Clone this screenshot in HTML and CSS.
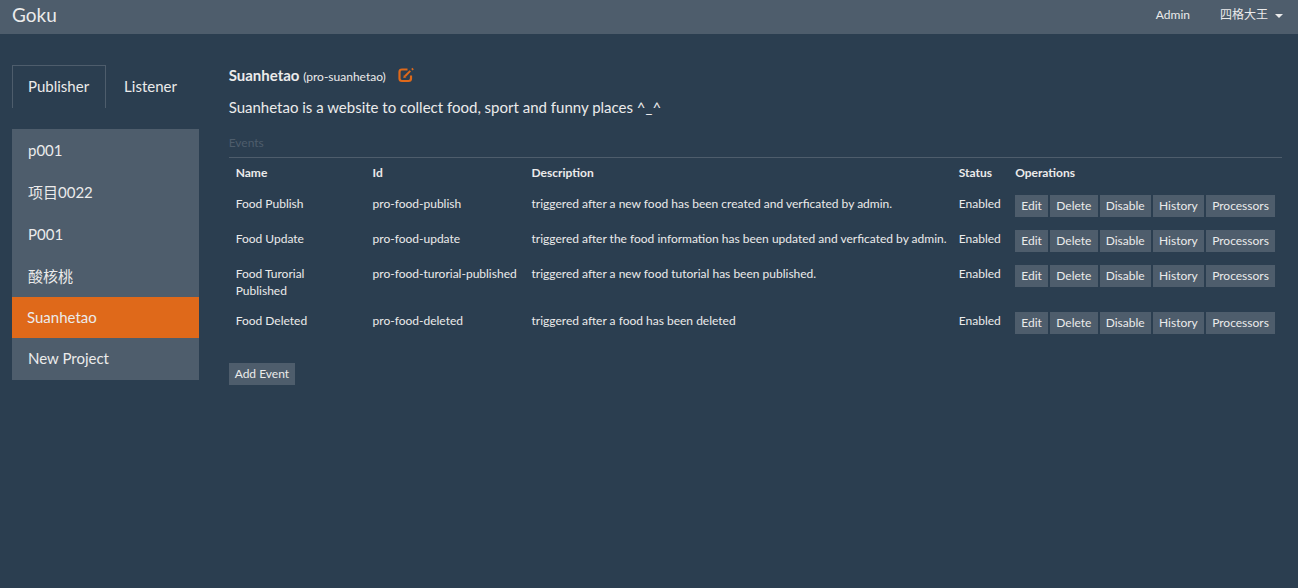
FILE: index.html
```html
<!DOCTYPE html>
<html lang="en">
<head>
<meta charset="utf-8">
<title>Goku</title>
<link rel="stylesheet" href="styles.css">
</head>
<body>
<header class="navbar">
  <a class="brand" href="#">Goku</a>
  <nav class="nav-links">
    <a href="#">Admin</a>
    <a href="#">四格大王<span class="caret"></span></a>
  </nav>
</header>
<div class="layout">
  <aside class="sidebar">
    <nav class="tabs">
      <a class="tab tab-active" href="#">Publisher</a>
      <a class="tab" href="#">Listener</a>
    </nav>
    <nav class="projects">
      <a class="project" href="#">p001</a>
      <a class="project" href="#">项目0022</a>
      <a class="project" href="#">P001</a>
      <a class="project" href="#">酸核桃</a>
      <a class="project project-active" href="#">Suanhetao</a>
      <a class="project" href="#">New Project</a>
    </nav>
  </aside>
  <main class="content">
    <h1 class="title">Suanhetao <small>(pro-suanhetao)</small>
      <a class="edit" href="#" aria-label="Edit project"><svg viewBox="0 0 16 16" width="16" height="16" fill="none" stroke="currentColor"><path d="M9.500 2.500H4Q1.500 2.500 1.500 5V11.500Q1.500 14 4 14H10.500Q13 14 13 11.500V8.500" stroke-width="2.200"/><path d="M7 9.200L12.300 3.900" stroke-width="2"/><path d="M5.300 11L5.900 8L8.300 10.400ZM13.200 2L14.400 0.800L15.800 2.200L14.600 3.400Z" fill="currentColor" stroke="none"/></svg></a>
    </h1>
    <p class="description">Suanhetao is a website to collect food, sport and funny places ^_^</p>
    <h2 class="legend">Events</h2>
    <table class="events">
      <thead>
        <tr><th class="name-col">Name</th><th>Id</th><th class="desc-col">Description</th><th>Status</th><th>Operations</th></tr>
      </thead>
      <tbody>
        <tr>
          <td>Food Publish</td><td>pro-food-publish</td><td class="desc-col">triggered after a new food has been created and verficated by admin.</td><td>Enabled</td>
          <td><div class="ops"><button class="btn">Edit</button><button class="btn">Delete</button><button class="btn">Disable</button><button class="btn">History</button><button class="btn">Processors</button></div></td>
        </tr>
        <tr>
          <td>Food Update</td><td>pro-food-update</td><td class="desc-col">triggered after the food information has been updated and verficated by admin.</td><td>Enabled</td>
          <td><div class="ops"><button class="btn">Edit</button><button class="btn">Delete</button><button class="btn">Disable</button><button class="btn">History</button><button class="btn">Processors</button></div></td>
        </tr>
        <tr>
          <td>Food Turorial Published</td><td>pro-food-turorial-published</td><td class="desc-col">triggered after a new food tutorial has been published.</td><td>Enabled</td>
          <td><div class="ops"><button class="btn">Edit</button><button class="btn">Delete</button><button class="btn">Disable</button><button class="btn">History</button><button class="btn">Processors</button></div></td>
        </tr>
        <tr>
          <td>Food Deleted</td><td>pro-food-deleted</td><td class="desc-col">triggered after a food has been deleted</td><td>Enabled</td>
          <td><div class="ops"><button class="btn">Edit</button><button class="btn">Delete</button><button class="btn">Disable</button><button class="btn">History</button><button class="btn">Processors</button></div></td>
        </tr>
      </tbody>
    </table>
    <button class="btn">Add Event</button>
  </main>
</div>
</body>
</html>
```
FILE: styles.css
```css
* {
  box-sizing: border-box;
}

body {
  margin: 0;
  background: #2b3e50;
  color: #ebebeb;
  font: 15px/21px Lato, "Noto Sans CJK SC", sans-serif;
}

a {
  color: inherit;
  text-decoration: none;
}

.navbar {
  display: flex;
  justify-content: space-between;
  padding: 4px 15px 8px 12px;
  background: #4e5d6c;
}

.brand {
  font-size: 19px;
  line-height: 22px;
}

.nav-links {
  display: flex;
  gap: 30px;
  font-size: 12px;
  line-height: 22px;
}

.caret {
  display: inline-block;
  margin-left: 7px;
  border: 4px solid transparent;
  border-top-color: currentColor;
  border-bottom: 0;
  vertical-align: middle;
}

.layout {
  display: grid;
  grid-template-columns: repeat(6, minmax(0, 1fr));
  column-gap: 30px;
  padding: 31px 16px 0 12px;
}

.tabs {
  display: flex;
  gap: 2px;
  margin-bottom: 21px;
}

.tab {
  padding: 10px 16px 11px 15px;
  border: 1px solid transparent;
  border-bottom: 0;
}

.tab-active {
  border-color: #4e5d6c;
}

.projects {
  display: flex;
  flex-direction: column;
  background: #4e5d6c;
}

.project {
  padding: 11px 16px 10px;
}

.project:last-child {
  padding: 10px 16px 11px;
}

.project-active {
  padding: 10px 15px;
  background: #df691a;
}

.content {
  grid-column: 2 / -1;
}

.title {
  margin: 0 0 10px;
  font-size: 15px;
  line-height: 21px;
}

.title small {
  font-size: 12px;
  font-weight: 400;
}

.edit {
  margin-left: 9px;
  color: #df691a;
}

.edit svg {
  vertical-align: -2px;
}

.description {
  margin: 0 0 15px;
}

.legend {
  margin: 0;
  padding-bottom: 4px;
  border-bottom: 1px solid #4e5d6c;
  color: #4e5d6c;
  font-size: 12px;
  font-weight: 400;
  line-height: 20px;
}

.events {
  width: 100%;
  margin-bottom: 22px;
  border-collapse: collapse;
  font-size: 12px;
  line-height: 17px;
}

.events th,
.events td {
  padding: 7px 7px 6px;
  text-align: left;
  vertical-align: top;
}

.events th {
  padding: 6px 7px 7px;
}

.events .name-col {
  width: 13%;
}

.events .desc-col {
  padding-right: 3px;
}

.events th:last-child {
  width: 26%;
}

.ops {
  display: flex;
  gap: 2px;
}

.ops .btn {
  flex: 1 0 auto;
}

.btn {
  padding: 2px 6px 3px;
  border: 0;
  background: #4e5d6c;
  color: #ebebeb;
  font: inherit;
  font-size: 12px;
  line-height: 17px;
}
```
